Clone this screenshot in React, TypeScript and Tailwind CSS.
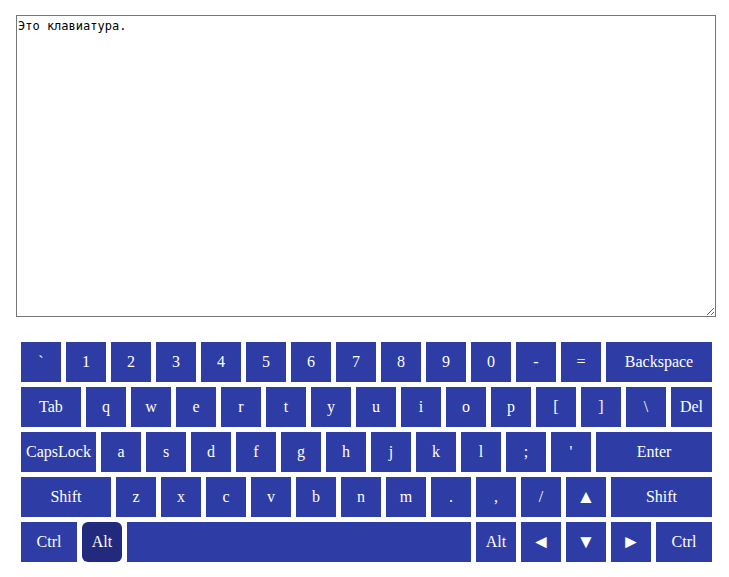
import clsx from 'clsx';

type KeyDef = { label: string; w?: string; active?: boolean; arrow?: boolean };

const rows: KeyDef[][] = [
  [
    { label: '`' },
    { label: '1' },
    { label: '2' },
    { label: '3' },
    { label: '4' },
    { label: '5' },
    { label: '6' },
    { label: '7' },
    { label: '8' },
    { label: '9' },
    { label: '0' },
    { label: '-' },
    { label: '=' },
    { label: 'Backspace', w: 'w-[106px]' },
  ],
  [
    { label: 'Tab', w: 'w-[60px]' },
    { label: 'q' },
    { label: 'w' },
    { label: 'e' },
    { label: 'r' },
    { label: 't' },
    { label: 'y' },
    { label: 'u' },
    { label: 'i' },
    { label: 'o' },
    { label: 'p' },
    { label: '[' },
    { label: ']' },
    { label: '\\' },
    { label: 'Del', w: 'w-[41px]' },
  ],
  [
    { label: 'CapsLock', w: 'w-[75px]' },
    { label: 'a' },
    { label: 's' },
    { label: 'd' },
    { label: 'f' },
    { label: 'g' },
    { label: 'h' },
    { label: 'j' },
    { label: 'k' },
    { label: 'l' },
    { label: ';' },
    { label: "'" },
    { label: 'Enter', w: 'w-[116px]' },
  ],
  [
    { label: 'Shift', w: 'w-[90px]' },
    { label: 'z' },
    { label: 'x' },
    { label: 'c' },
    { label: 'v' },
    { label: 'b' },
    { label: 'n' },
    { label: 'm' },
    { label: '.' },
    { label: ',' },
    { label: '/' },
    { label: '▲', arrow: true },
    { label: 'Shift', w: 'w-[101px]' },
  ],
  [
    { label: 'Ctrl', w: 'w-[56px]' },
    { label: 'Alt', active: true },
    { label: '', w: 'w-[344px]' },
    { label: 'Alt' },
    { label: '◄', arrow: true },
    { label: '▼', arrow: true },
    { label: '►', arrow: true },
    { label: 'Ctrl', w: 'w-[56px]' },
  ],
];

const Key = ({ label, w = 'w-10', active = false, arrow = false }: KeyDef) => (
  <div
    className={clsx(
      'h-10 shrink-0 flex items-center justify-center text-white',
      w,
      arrow ? 'text-[19px]' : 'text-base',
      active ? 'bg-[#212a7d] rounded-md' : 'bg-[#2e3da6]',
    )}
  >
    {label}
  </div>
);

const App = () => {
  return (
    <div className="w-[729px] h-[577px] bg-white pl-4 pt-[15px]">
      <textarea
        className="block w-[700px] h-[302px] border border-[#767676] pt-[3px] pl-px text-[12px] leading-[14px] text-black resize-y outline-none font-['DejaVu_Sans_Mono',monospace]"
        defaultValue="Это клавиатура."
      />
      <div className="mt-[25px] ml-[5px] flex flex-col gap-[5px] font-['Liberation_Serif','Times_New_Roman',serif]">
        {rows.map((row, i) => (
          <div key={i} className="flex gap-[5px]">
            {row.map((k, j) => (
              <Key key={j} {...k} />
            ))}
          </div>
        ))}
      </div>
    </div>
  );
};

export default App;
